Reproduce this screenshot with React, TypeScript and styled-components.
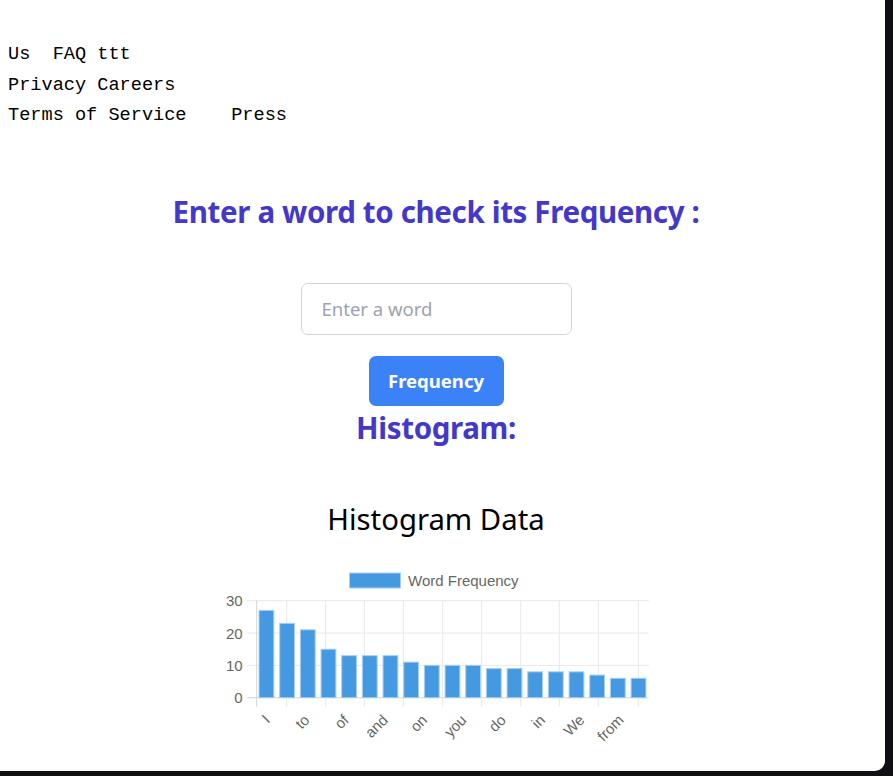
import React from 'react';
import styled, { createGlobalStyle } from 'styled-components';

const GlobalStyle = createGlobalStyle`
  html, body {
    margin: 0;
    padding: 0;
    background: #0f0f14;
  }
`;

const Panel = styled.div`
  width: 885px;
  height: 771px;
  box-sizing: border-box;
  background: #ffffff;
  border-bottom-right-radius: 10px;
  overflow: hidden;
  padding: 40px 21px 0 8px;
  display: flex;
  flex-direction: column;
`;

const LinkBlock = styled.div`
  font-family: 'Liberation Mono', 'DejaVu Sans Mono', monospace;
  font-size: 18.6px;
  line-height: 30.5px;
  color: #000;
  white-space: pre;
`;

const Main = styled.main`
  display: flex;
  flex-direction: column;
  align-items: center;
  font-family: 'Noto Sans', 'Open Sans', sans-serif;
`;

const Title = styled.h2<{ $top: number }>`
  margin: ${p => p.$top}px 0 0;
  font-size: 29.5px;
  line-height: 40px;
  font-weight: 700;
  color: #4338ca;
  letter-spacing: -0.36px;
`;

const WordInput = styled.input`
  margin-top: 51px;
  width: 271px;
  height: 52px;
  box-sizing: border-box;
  border: 1px solid #d1d5db;
  border-radius: 7px;
  padding: 0 20px;
  font-family: inherit;
  font-size: 18.5px;
  color: #111;
  outline: none;

  &::placeholder {
    color: #9ca3af;
  }
`;

const Button = styled.button`
  margin-top: 21px;
  width: 135px;
  height: 50px;
  border: none;
  border-radius: 7px;
  background: #3b82f6;
  color: #fff;
  font-family: inherit;
  font-size: 18.5px;
  font-weight: 700;
`;

const ChartTitle = styled.h3`
  margin: 51px 0 0;
  font-size: 29.3px;
  line-height: 40px;
  font-weight: 400;
  color: #000;
`;

const ChartSvg = styled.svg`
  display: block;
  margin-top: 21px;
  font-family: 'Liberation Sans', Arial, sans-serif;
`;

const labels = ['I', 'to', 'of', 'and', 'on', 'you', 'do', 'in', 'We', 'from'];
const values = [27, 23, 21, 15, 13, 13, 13, 11, 10, 10, 10, 9, 9, 8, 8, 8, 7, 6, 6];
const vLines = [56.7, 86.7, 125.7, 164.3, 203.3, 242.7, 281.7, 320.7, 359.3, 398.3, 438.3];

function Histogram() {
  const left = 56.1;
  const step = 20.67;
  const zeroY = 137.7;
  const topY = 40.7;
  const scale = (zeroY - topY) / 30;
  return (
    <ChartSvg width={472} height={200} viewBox="0 0 472 200">
      <rect x={149.5} y={13} width={51} height={15} fill="#4499e1" stroke="#a6cef2" strokeWidth={1} />
      <text x={208} y={25.5} fontSize={15} fill="#666">Word Frequency</text>
      {[30, 20, 10, 0].map((v, i) => {
        const y = topY + i * (zeroY - topY) / 3;
        return (
          <g key={v}>
            <line x1={46.7} x2={448.7} y1={y} y2={y} stroke={v === 0 ? '#d6d6d6' : '#e8e8e8'} strokeWidth={1} />
            <text x={42.7} y={y + 5.5} fontSize={15} fill="#666" textAnchor="end">{v}</text>
          </g>
        );
      })}
      {vLines.map((x, i) => (
        <line key={x} x1={x} x2={x} y1={topY} y2={146.7} stroke={i === 0 ? '#d6d6d6' : '#e8e8e8'} strokeWidth={1} />
      ))}
      {values.map((v, i) => {
        const cx = left + (i + 0.5) * step;
        const h = v * scale;
        return (
          <rect key={i} x={cx - 7.4} y={zeroY - h} width={14.8} height={h} fill="#4499e1" stroke="#a6cef2" strokeWidth={1} />
        );
      })}
      {labels.map((w, k) => {
        const x = 71 + k * 39.3;
        const y = 161;
        return (
          <text key={w} x={x} y={y} fontSize={15} fill="#666" textAnchor="end" transform={`rotate(-45 ${x} ${y})`}>
            {w}
          </text>
        );
      })}
    </ChartSvg>
  );
}

export default function App() {
  return (
    <>
      <GlobalStyle />
      <Panel>
        <LinkBlock>{'Us  FAQ ttt\nPrivacy Careers\nTerms of Service    Press'}</LinkBlock>
        <Main>
          <Title $top={60}>Enter a word to check its Frequency :</Title>
          <WordInput placeholder="Enter a word" />
          <Button>Frequency</Button>
          <Title $top={2}>Histogram:</Title>
          <ChartTitle>Histogram Data</ChartTitle>
          <Histogram />
        </Main>
      </Panel>
    </>
  );
}
